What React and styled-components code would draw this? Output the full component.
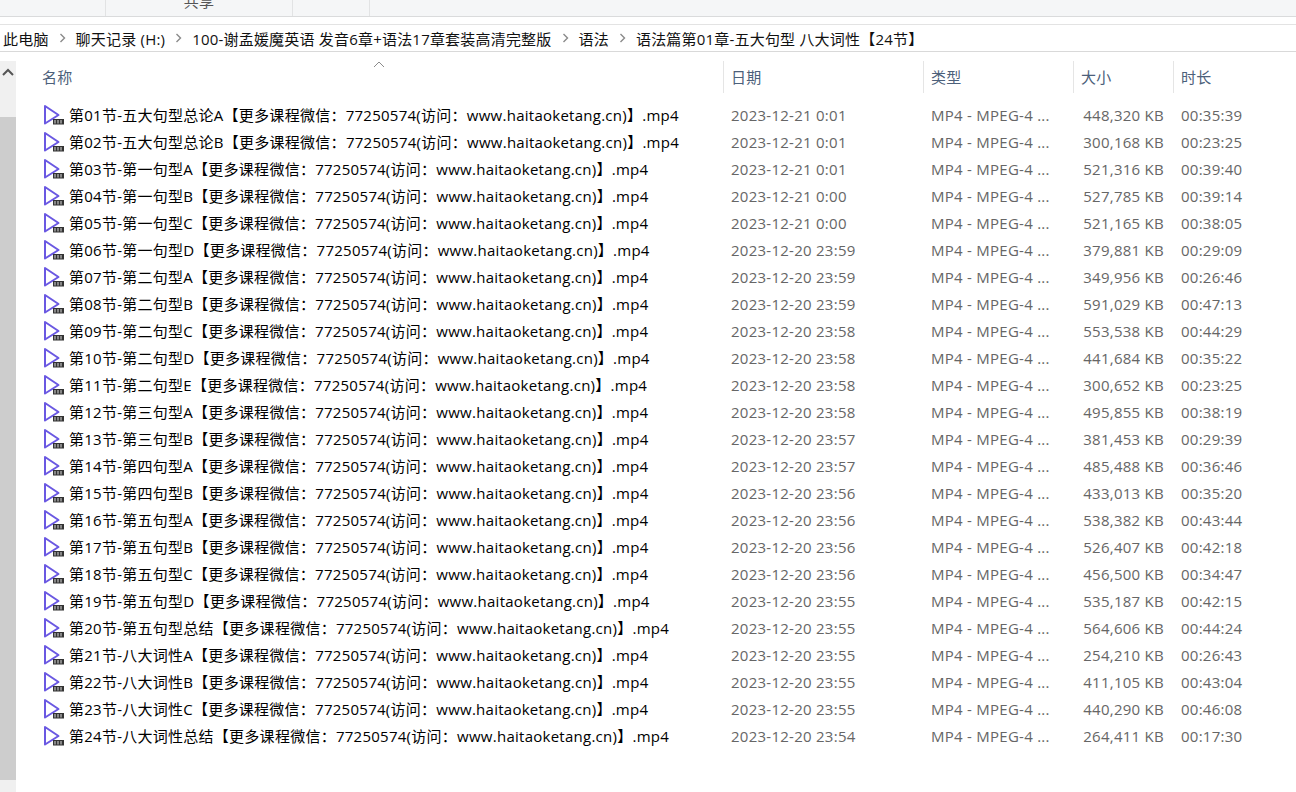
import React from 'react';
import styled, { createGlobalStyle } from 'styled-components';

const GlobalStyle = createGlobalStyle`
  html, body {
    margin: 0;
    height: 100%;
    background: #fff;
    overflow: hidden;
  }
  body {
    font-family: "Open Sans", "Noto Sans CJK SC", sans-serif;
    font-size: 15px;
    letter-spacing: 0.26px;
  }
`;

const Window = styled.div`
  width: 1296px;
  height: 792px;
  display: flex;
  flex-direction: column;
  overflow: hidden;
`;

const Ribbon = styled.div`
  height: 16px;
  flex: none;
  display: grid;
  grid-template-columns: 106px 187px 77px;
  background: #f5f6f7;
  border-bottom: 1px solid #dadbdc;
`;

const RibbonGroup = styled.div`
  border-right: 1px solid #e2e3e4;
  color: #555;
  line-height: 16px;
  height: 16px;
  text-align: center;
  overflow: hidden;
  span {
    display: block;
    margin-top: -7px;
  }
`;

const AddressBar = styled.div`
  height: 26px;
  flex: none;
  margin-top: 7px;
  display: flex;
  align-items: center;
  padding-left: 3px;
  background: #fff;
  border-top: 1px solid #e3e3e3;
  border-bottom: 1px solid #d9d9d9;
  color: #111;
  letter-spacing: 0.2px;
`;

const Crumb = styled.span`
  white-space: pre;
`;

const Chevron = styled.svg`
  width: 27px;
  height: 10px;
  flex: none;
  fill: none;
  stroke: #8a8a8a;
  stroke-width: 1.4;
`;

const Content = styled.div`
  flex: 1;
  min-height: 0;
  display: flex;
`;

const ScrollTrack = styled.div`
  width: 16px;
  flex: none;
  margin-top: 9px;
  background: #f0f0f0;
  display: flex;
  flex-direction: column;
`;

const ScrollButton = styled.div`
  height: 56px;
  flex: none;
  display: flex;
  justify-content: center;
  padding-top: 7px;
  box-sizing: border-box;
  svg {
    width: 12px;
    height: 8px;
    fill: none;
    stroke: #555;
    stroke-width: 2;
  }
`;

const ScrollThumb = styled.div`
  height: 663px;
  flex: none;
  background: #cdcdcd;
`;

const List = styled.div`
  flex: 1;
  min-width: 0;
`;

const HeaderRow = styled.div`
  position: relative;
  height: 50px;
  display: grid;
  grid-template-columns: 707px 200px 150px 100px 1fr;
  align-items: center;
`;

const HeaderCell = styled.div`
  height: 32px;
  line-height: 32px;
  color: #4c607a;
  padding-left: ${p => (p.$first ? '26px' : '7px')};
  border-left: ${p => (p.$first ? 'none' : '1px solid #e5e5e5')};
`;

const SortArrow = styled.svg`
  position: absolute;
  left: 357px;
  top: 9px;
  width: 12px;
  height: 7px;
  fill: none;
  stroke: #8b8b8b;
`;

const Row = styled.div`
  height: 27px;
  display: grid;
  grid-template-columns: 707px 200px 150px 100px 1fr;
  align-items: center;
  line-height: 27px;
`;

const NameCell = styled.div`
  display: flex;
  align-items: center;
  padding-left: 27px;
  color: #000;
  white-space: nowrap;
`;

const FileIcon = styled.svg`
  width: 21px;
  height: 22px;
  flex: none;
  margin-right: 5px;
  margin-top: -2px;
`;

const Cell = styled.div`
  color: #666;
  white-space: nowrap;
  padding-left: 8px;
  padding-right: ${p => p.$right || '0'};
  text-align: ${p => p.$align || 'left'};
`;

const rows = [
  ['第01节-五大句型总论A', '2023-12-21 0:01', '448,320 KB', '00:35:39'],
  ['第02节-五大句型总论B', '2023-12-21 0:01', '300,168 KB', '00:23:25'],
  ['第03节-第一句型A', '2023-12-21 0:01', '521,316 KB', '00:39:40'],
  ['第04节-第一句型B', '2023-12-21 0:00', '527,785 KB', '00:39:14'],
  ['第05节-第一句型C', '2023-12-21 0:00', '521,165 KB', '00:38:05'],
  ['第06节-第一句型D', '2023-12-20 23:59', '379,881 KB', '00:29:09'],
  ['第07节-第二句型A', '2023-12-20 23:59', '349,956 KB', '00:26:46'],
  ['第08节-第二句型B', '2023-12-20 23:59', '591,029 KB', '00:47:13'],
  ['第09节-第二句型C', '2023-12-20 23:58', '553,538 KB', '00:44:29'],
  ['第10节-第二句型D', '2023-12-20 23:58', '441,684 KB', '00:35:22'],
  ['第11节-第二句型E', '2023-12-20 23:58', '300,652 KB', '00:23:25'],
  ['第12节-第三句型A', '2023-12-20 23:58', '495,855 KB', '00:38:19'],
  ['第13节-第三句型B', '2023-12-20 23:57', '381,453 KB', '00:29:39'],
  ['第14节-第四句型A', '2023-12-20 23:57', '485,488 KB', '00:36:46'],
  ['第15节-第四句型B', '2023-12-20 23:56', '433,013 KB', '00:35:20'],
  ['第16节-第五句型A', '2023-12-20 23:56', '538,382 KB', '00:43:44'],
  ['第17节-第五句型B', '2023-12-20 23:56', '526,407 KB', '00:42:18'],
  ['第18节-第五句型C', '2023-12-20 23:56', '456,500 KB', '00:34:47'],
  ['第19节-第五句型D', '2023-12-20 23:55', '535,187 KB', '00:42:15'],
  ['第20节-第五句型总结', '2023-12-20 23:55', '564,606 KB', '00:44:24'],
  ['第21节-八大词性A', '2023-12-20 23:55', '254,210 KB', '00:26:43'],
  ['第22节-八大词性B', '2023-12-20 23:55', '411,105 KB', '00:43:04'],
  ['第23节-八大词性C', '2023-12-20 23:55', '440,290 KB', '00:46:08'],
  ['第24节-八大词性总结', '2023-12-20 23:54', '264,411 KB', '00:17:30'],
];

const SUFFIX = '【更多课程微信：77250574(访问：www.haitaoketang.cn)】.mp4';

const crumbs = [
  '此电脑',
  '聊天记录 (H:)',
  '100-谢孟媛魔英语 发音6章+语法17章套装高清完整版',
  '语法',
  '语法篇第01章-五大句型 八大词性【24节】',
];

const VideoIcon = () => (
  <FileIcon viewBox="0 0 21 22">
    <path d="M2 2 L15.5 11 L2 19.5 Z" fill="#fff" stroke="#6a58e2" strokeWidth="2" strokeLinejoin="round" />
    <rect x="10" y="15" width="11" height="5.5" fill="#333" />
    <path d="M12 16v3.5M15 16v3.5M18 16v3.5" stroke="#ddd" strokeWidth="1" />
  </FileIcon>
);

const App = () => (
  <Window>
    <GlobalStyle />
    <Ribbon>
      <RibbonGroup />
      <RibbonGroup><span>共享</span></RibbonGroup>
      <RibbonGroup />
    </Ribbon>
    <AddressBar>
      {crumbs.map((c, i) => (
        <React.Fragment key={c}>
          {i > 0 && (
            <Chevron viewBox="0 0 27 10">
              <path d="M11.5 1 L15.5 5 L11.5 9" />
            </Chevron>
          )}
          <Crumb>{c}</Crumb>
        </React.Fragment>
      ))}
    </AddressBar>
    <Content>
      <ScrollTrack>
        <ScrollButton>
          <svg viewBox="0 0 12 8"><path d="M1 7 L6 2 L11 7" /></svg>
        </ScrollButton>
        <ScrollThumb />
      </ScrollTrack>
      <List>
        <HeaderRow>
          <SortArrow viewBox="0 0 12 7"><path d="M1 6 L6 1 L11 6" /></SortArrow>
          <HeaderCell $first>名称</HeaderCell>
          <HeaderCell>日期</HeaderCell>
          <HeaderCell>类型</HeaderCell>
          <HeaderCell>大小</HeaderCell>
          <HeaderCell>时长</HeaderCell>
        </HeaderRow>
        {rows.map(([name, date, size, time]) => (
          <Row key={name}>
            <NameCell>
              <VideoIcon />
              {name}{SUFFIX}
            </NameCell>
            <Cell>{date}</Cell>
            <Cell>MP4 - MPEG-4 ...</Cell>
            <Cell $align="right" $right="9px">{size}</Cell>
            <Cell>{time}</Cell>
          </Row>
        ))}
      </List>
    </Content>
  </Window>
);

export default App;
